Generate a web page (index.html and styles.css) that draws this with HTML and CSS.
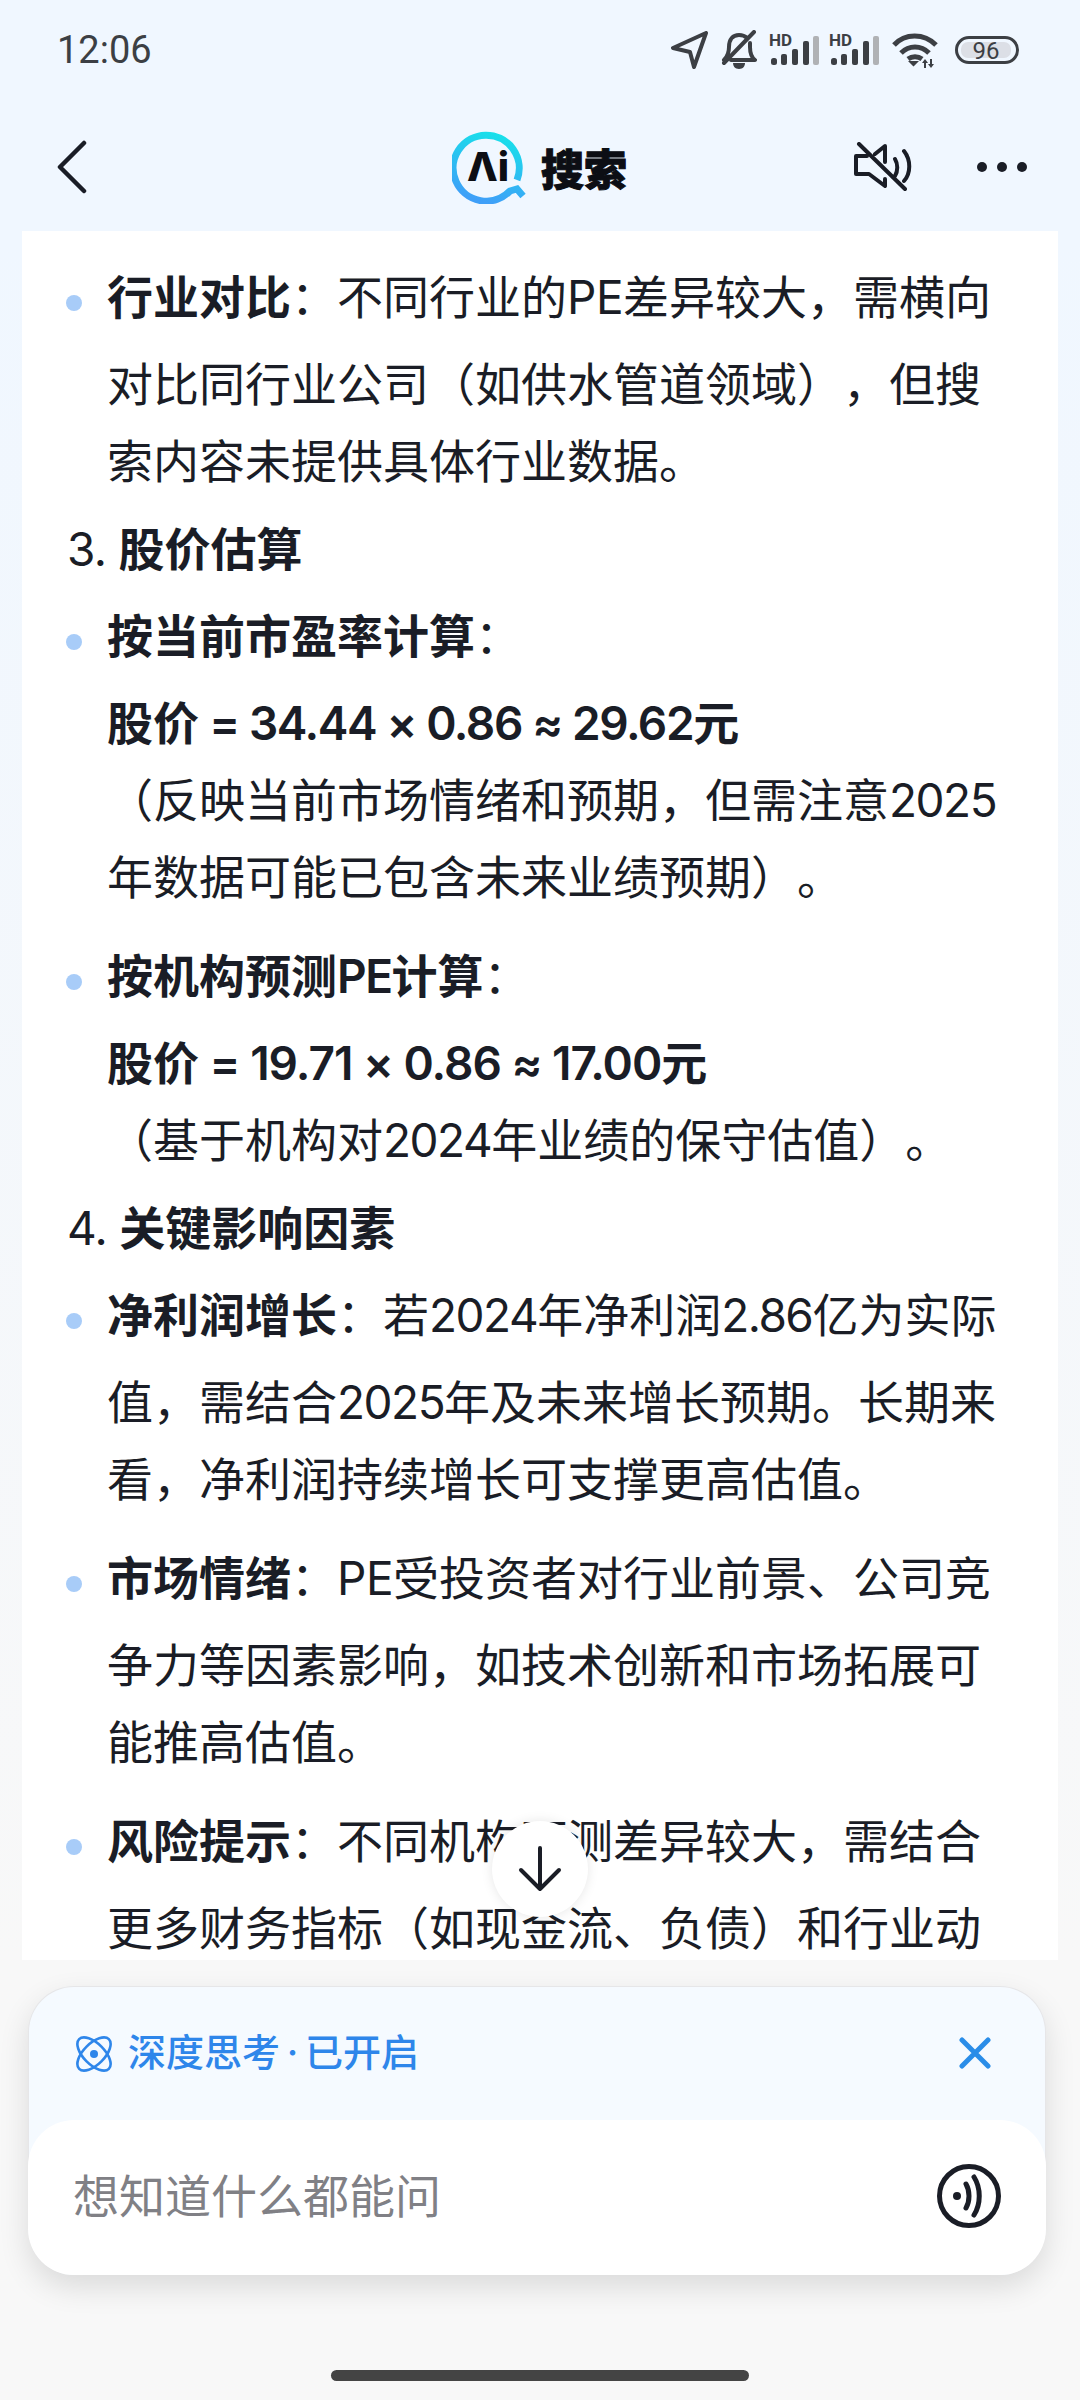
FILE: index.html
```html
<!DOCTYPE html>
<html lang="zh-CN">
<head>
  <meta charset="UTF-8">
  <title>AI 搜索</title>
  <link rel="stylesheet" href="styles.css">
</head>
<body>
  <div class="screen">

    <!-- status bar -->
    <div class="status">
      <span class="time">12:06</span>
      <div class="status-icons">
        <svg class="ic-nav" width="38" height="38" viewBox="0 0 38 38"><path d="M35 2 2 17l17 4 4 15z"/></svg>
        <svg class="ic-bell" width="36" height="40" viewBox="0 0 36 40"><path d="M3 30c3-3 5-6 5-13C8 9 12 5 18 5c3 0 6 1 8 3M29 13v4c0 6 1 10 5 13H10M33 2 3 33"/><path class="solid" d="M12 33h12c0 3-2 6-6 6s-6-3-6-6z"/></svg>
        <svg class="ic-signal" width="50" height="32" viewBox="0 0 50 32"><text class="hd" x="0" y="12">HD</text><rect x="2" y="24" width="6" height="7" rx="2.5"/><rect x="12" y="20" width="6" height="11" rx="2"/><rect x="23" y="15" width="6" height="16" rx="2"/><rect x="34" y="7" width="6" height="24" rx="2"/><rect class="off" x="44" y="2" width="6" height="29" rx="2"/></svg>
        <svg class="ic-signal" width="50" height="32" viewBox="0 0 50 32"><text class="hd" x="0" y="12">HD</text><rect x="2" y="24" width="6" height="7" rx="2.5"/><rect x="12" y="20" width="6" height="11" rx="2"/><rect x="23" y="15" width="6" height="16" rx="2"/><rect x="34" y="7" width="6" height="24" rx="2"/><rect class="off" x="44" y="2" width="6" height="29" rx="2"/></svg>
        <svg class="ic-wifi" width="46" height="36" viewBox="0 0 46 36"><path class="wave" d="M2 13C13 1 32 1 44 13M9 21c8-8 20-8 28 0M16 27c4-3 10-3 14 0"/><path class="solid" d="M16 29h11l-5.500 5.500zM33 27l3 4h-2v5h-2v-5h-2zM39 36l-3-4h2v-5h2v5h2z"/></svg>
        <svg class="ic-battery" width="64" height="28" viewBox="0 0 64 28"><rect class="shell" x="1.500" y="1.500" width="61" height="25" rx="12.500"/><rect class="level" x="6" y="6" width="50" height="16" rx="7"/><text class="batt" x="31" y="23">96</text></svg>
      </div>
    </div>

    <!-- title bar -->
    <div class="nav">
      <svg class="back" width="32" height="54" viewBox="0 0 32 54"><path d="M28 3 4 27l24 24"/></svg>
      <div class="brand">
        <svg class="logo" width="76" height="74" viewBox="0 0 76 74">
          <defs>
            <linearGradient id="ring" x1="0.7" y1="0" x2="0.4" y2="1">
              <stop offset="0" stop-color="#18e0ea"/>
              <stop offset="1" stop-color="#3f9ff8"/>
            </linearGradient>
          </defs>
          <path class="ring" d="M65 50A33 33 0 1 0 58 61L65 59 71 66"/>
          <text class="logo-text" x="36" y="51">Λi</text>
        </svg>
        <span class="brand-name">搜索</span>
      </div>
      <svg class="mute" width="58" height="50" viewBox="0 0 58 50">
        <path d="M5 2 51 47M13 14H2v18h13l16 12v-7M31 20V4L21 12M41 17c3 5 3 12 0 17M50 9c7 9 7 22 0 30"/>
      </svg>
      <div class="more"><span></span><span></span><span></span></div>
    </div>

    <!-- answer -->
    <div class="panel">
      <ul class="list">
        <li class="item">
          <span class="dot"></span>
          <div class="item-body">
            <p class="lead"><strong>行业对比</strong>：不同行业的<span class="pe">PE</span>差异较大，需横向</p>
            <p>对比同行业公司（如供水管道领域），但搜</p>
            <p>索内容未提供具体行业数据。</p>
          </div>
        </li>
      </ul>
      <h4 class="step"><span class="step-no">3. </span><strong>股价估算</strong></h4>
      <ul class="list">
        <li class="item">
          <span class="dot"></span>
          <div class="item-body">
            <p class="lead"><strong>按当前市盈率计算</strong>：</p>
            <p><strong>股价<span class="calc"> = 34.44 × 0.86 ≈ 29.62</span>元</strong></p>
            <p>（反映当前市场情绪和预期，但需注意<span class="num">2025</span></p>
            <p>年数据可能已包含未来业绩预期）。</p>
          </div>
        </li>
        <li class="item">
          <span class="dot"></span>
          <div class="item-body">
            <p class="lead"><strong>按机构预测<span class="num">PE</span>计算</strong>：</p>
            <p><strong>股价<span class="calc calc-ones"> = 19.71 × 0.86 ≈ 17.00</span>元</strong></p>
            <p>（基于机构对<span class="num">2024</span>年业绩的保守估值）。</p>
          </div>
        </li>
      </ul>
      <h4 class="step"><span class="step-no">4. </span><strong>关键影响因素</strong></h4>
      <ul class="list">
        <li class="item">
          <span class="dot"></span>
          <div class="item-body">
            <p class="lead"><strong>净利润增长</strong>：若<span class="num">2024</span>年净利润<span class="num">2.86</span>亿为实际</p>
            <p>值，需结合<span class="num">2025</span>年及未来增长预期。长期来</p>
            <p>看，净利润持续增长可支撑更高估值。</p>
          </div>
        </li>
        <li class="item">
          <span class="dot"></span>
          <div class="item-body">
            <p class="lead"><strong>市场情绪</strong>：<span class="pe">PE</span>受投资者对行业前景、公司竞</p>
            <p>争力等因素影响，如技术创新和市场拓展可</p>
            <p>能推高估值。</p>
          </div>
        </li>
        <li class="item">
          <span class="dot"></span>
          <div class="item-body">
            <p class="lead"><strong>风险提示</strong>：不同机构预测差异较大，需结合</p>
            <p>更多财务指标（如现金流、负债）和行业动</p>
          </div>
        </li>
      </ul>
      <button class="to-bottom">
        <svg width="44" height="46" viewBox="0 0 44 46"><path d="M22 2v41M3 24l19 19 19-19"/></svg>
      </button>
    </div>

    <!-- input -->
    <div class="composer">
      <div class="think">
        <svg class="atom" width="38" height="38" viewBox="0 0 38 38">
          <ellipse cx="19" cy="19" rx="21" ry="10.500" transform="rotate(45 19 19)"/>
          <ellipse cx="19" cy="19" rx="21" ry="10.500" transform="rotate(-45 19 19)"/>
          <circle class="solid" cx="19" cy="19" r="4"/>
        </svg>
        <span class="think-label">深度思考<span class="mid">·</span>已开启</span>
        <svg class="close" width="32" height="32" viewBox="0 0 32 32"><path d="M3 3l26 26M29 3 3 29"/></svg>
      </div>
      <div class="ask">
        <span class="placeholder">想知道什么都能问</span>
        <svg class="voice" width="64" height="64" viewBox="0 0 64 64">
          <circle cx="32" cy="32" r="29.500"/>
          <path d="M29 20c4 7 4 17 0 24M37 13c7 11 7 27 0 38"/>
          <circle class="solid" cx="20" cy="32" r="4"/>
        </svg>
      </div>
    </div>

    <div class="home-bar"></div>
  </div>
</body>
</html>
```

FILE: styles.css
```css
* {
  box-sizing: border-box;
}

html, body {
  margin: 0;
  padding: 0;
}

body {
  font-family: Inter, "Noto Sans CJK SC", sans-serif;
  color: #1a1d26;
}

svg {
  display: block;
  flex: none;
  fill: none;
}

.screen {
  display: flex;
  flex-direction: column;
  width: 1080px;
  height: 2400px;
  overflow: hidden;
  background: linear-gradient(#f0f7ff 0, #f0f7ff 240px, #f8f8f8 1960px);
}

/* status bar */
.status {
  display: flex;
  align-items: center;
  justify-content: space-between;
  height: 98px;
  padding: 2px 61px 0 57px;
  color: #3c3f44;
}

.time {
  font-family: Roboto, sans-serif;
  font-size: 38px;
}

.status-icons {
  display: flex;
  align-items: center;
}

.status-icons path {
  stroke: #3c3f44;
  stroke-width: 4;
  stroke-linecap: round;
  stroke-linejoin: round;
}

.status-icons path.wave {
  stroke-width: 5;
  stroke-linecap: butt;
}

.status-icons path.solid {
  fill: #3c3f44;
  stroke: none;
}

.ic-bell {
  margin-left: 12px;
}

.ic-signal {
  margin-left: 12px;
  overflow: visible;
}

.ic-signal + .ic-signal {
  margin-left: 10px;
}

.ic-signal rect {
  fill: #3c3f44;
}

.ic-signal rect.off {
  fill: #b0b2b5;
}

.hd {
  font-family: Roboto, sans-serif;
  font-size: 17px;
  font-weight: 700;
  fill: #3c3f44;
}

.ic-wifi {
  margin-left: 13px;
}

.ic-battery {
  margin-left: 17px;
}

.shell {
  stroke: #3c3f44;
  stroke-width: 3;
}

.level {
  fill: #dcdfe6;
}

.batt {
  font-family: Roboto, sans-serif;
  font-size: 24px;
  text-anchor: middle;
  fill: #3c3f44;
}

/* title bar */
.nav {
  display: flex;
  align-items: center;
  height: 133px;
  padding: 5px 53px 0 56px;
}

.back path {
  stroke: #1a1d26;
  stroke-width: 4.5;
  stroke-linecap: round;
  stroke-linejoin: round;
}

.brand {
  display: flex;
  align-items: center;
  margin-left: 364px;
}

.ring {
  stroke: url(#ring);
  stroke-width: 7;
}

.logo-text {
  font-size: 40px;
  font-weight: 800;
  text-anchor: middle;
  fill: #0c0e14;
}

.brand-name {
  margin-left: 13px;
  font-family: "Noto Sans CJK SC", sans-serif;
  font-size: 43px;
  font-weight: 900;
  line-height: 1;
  color: #0c0e14;
  -webkit-text-stroke: 1px #0c0e14;
}

.mute {
  margin-left: auto;
}

.mute path {
  stroke: #1a1d26;
  stroke-width: 4;
  stroke-linecap: round;
  stroke-linejoin: round;
}

.more {
  display: flex;
  gap: 10px;
  margin-left: 65px;
}

.more span {
  width: 10px;
  height: 10px;
  border-radius: 50%;
  background: #1a1d26;
}

/* answer */
.panel {
  position: relative;
  height: 1729px;
  margin: 0 22px;
  padding: 28px 0 0 46px;
  overflow: hidden;
  background: #fff;
  font-size: 46px;
  line-height: 77px;
  text-spacing-trim: space-all;
}

.panel p {
  margin: 0;
  white-space: nowrap;
}

.panel strong {
  font-weight: 600;
}

.num {
  letter-spacing: -1.5px;
}

.pe {
  letter-spacing: -0.5px;
}

.calc {
  letter-spacing: -1.4px;
}

.calc-ones {
  letter-spacing: -1px;
}

.list {
  margin: 0 0 11px;
  padding: 0;
  list-style: none;
}

.item {
  display: flex;
}

.item + .item {
  margin-top: 22px;
}

.dot {
  flex: none;
  width: 16px;
  height: 16px;
  margin: 36px 25px 0 -2px;
  border-radius: 50%;
  background: #a8ccf8;
}

.panel .lead {
  margin-bottom: 10px;
}

.step {
  margin: 0 0 10px -1px;
  font-size: 46px;
  font-weight: 400;
  line-height: 77px;
}

.step-no {
  letter-spacing: -0.7px;
}

.to-bottom {
  position: absolute;
  left: 470px;
  top: 1590px;
  display: flex;
  align-items: center;
  justify-content: center;
  width: 96px;
  height: 96px;
  padding: 0;
  border: 0;
  border-radius: 50%;
  background: #fff;
  box-shadow: 0 0 12px rgba(0, 0, 0, 0.1);
}

.to-bottom path {
  stroke: #1a1d26;
  stroke-width: 4;
  stroke-linecap: round;
  stroke-linejoin: round;
}

/* input */
.composer {
  width: 1018px;
  height: 289px;
  margin: 26px 0 0 28px;
  border: 1px solid #e6e6e8;
  border-bottom: 0;
  border-radius: 46px;
  background: #f5faff;
  box-shadow: 0 12px 30px rgba(0, 0, 0, 0.12);
}

.think {
  display: flex;
  align-items: center;
  height: 133px;
  padding: 0 54px 6px 46px;
}

.atom {
  margin-top: 6px;
}

.atom ellipse {
  stroke: #2e86ea;
  stroke-width: 2.6;
}

.atom circle {
  fill: #2e86ea;
}

.think-label {
  margin-left: 15px;
  font-family: "Noto Sans CJK SC", sans-serif;
  font-size: 38px;
  font-weight: 500;
  line-height: 1;
  color: #2e86ea;
}

.mid {
  display: inline-block;
  width: 25px;
  font-family: Inter, sans-serif;
  text-align: center;
}

.close {
  margin: 4px 0 0 auto;
}

.close path {
  stroke: #2a8de8;
  stroke-width: 5;
  stroke-linecap: round;
}

.ask {
  display: flex;
  align-items: center;
  justify-content: space-between;
  height: 155px;
  margin: 0 -1px;
  padding: 0 45px 3px 45px;
  border-radius: 46px;
  background: #fff;
}

.placeholder {
  font-size: 46px;
  line-height: 1;
  color: #808085;
}

.voice circle,
.voice path {
  stroke: #1a1d26;
  stroke-width: 5;
  stroke-linecap: round;
}

.voice circle.solid {
  fill: #1a1d26;
  stroke: none;
}

/* gesture bar */
.home-bar {
  width: 418px;
  height: 11px;
  margin: 95px 0 0 331px;
  border-radius: 6px;
  background: #444;
}
```
